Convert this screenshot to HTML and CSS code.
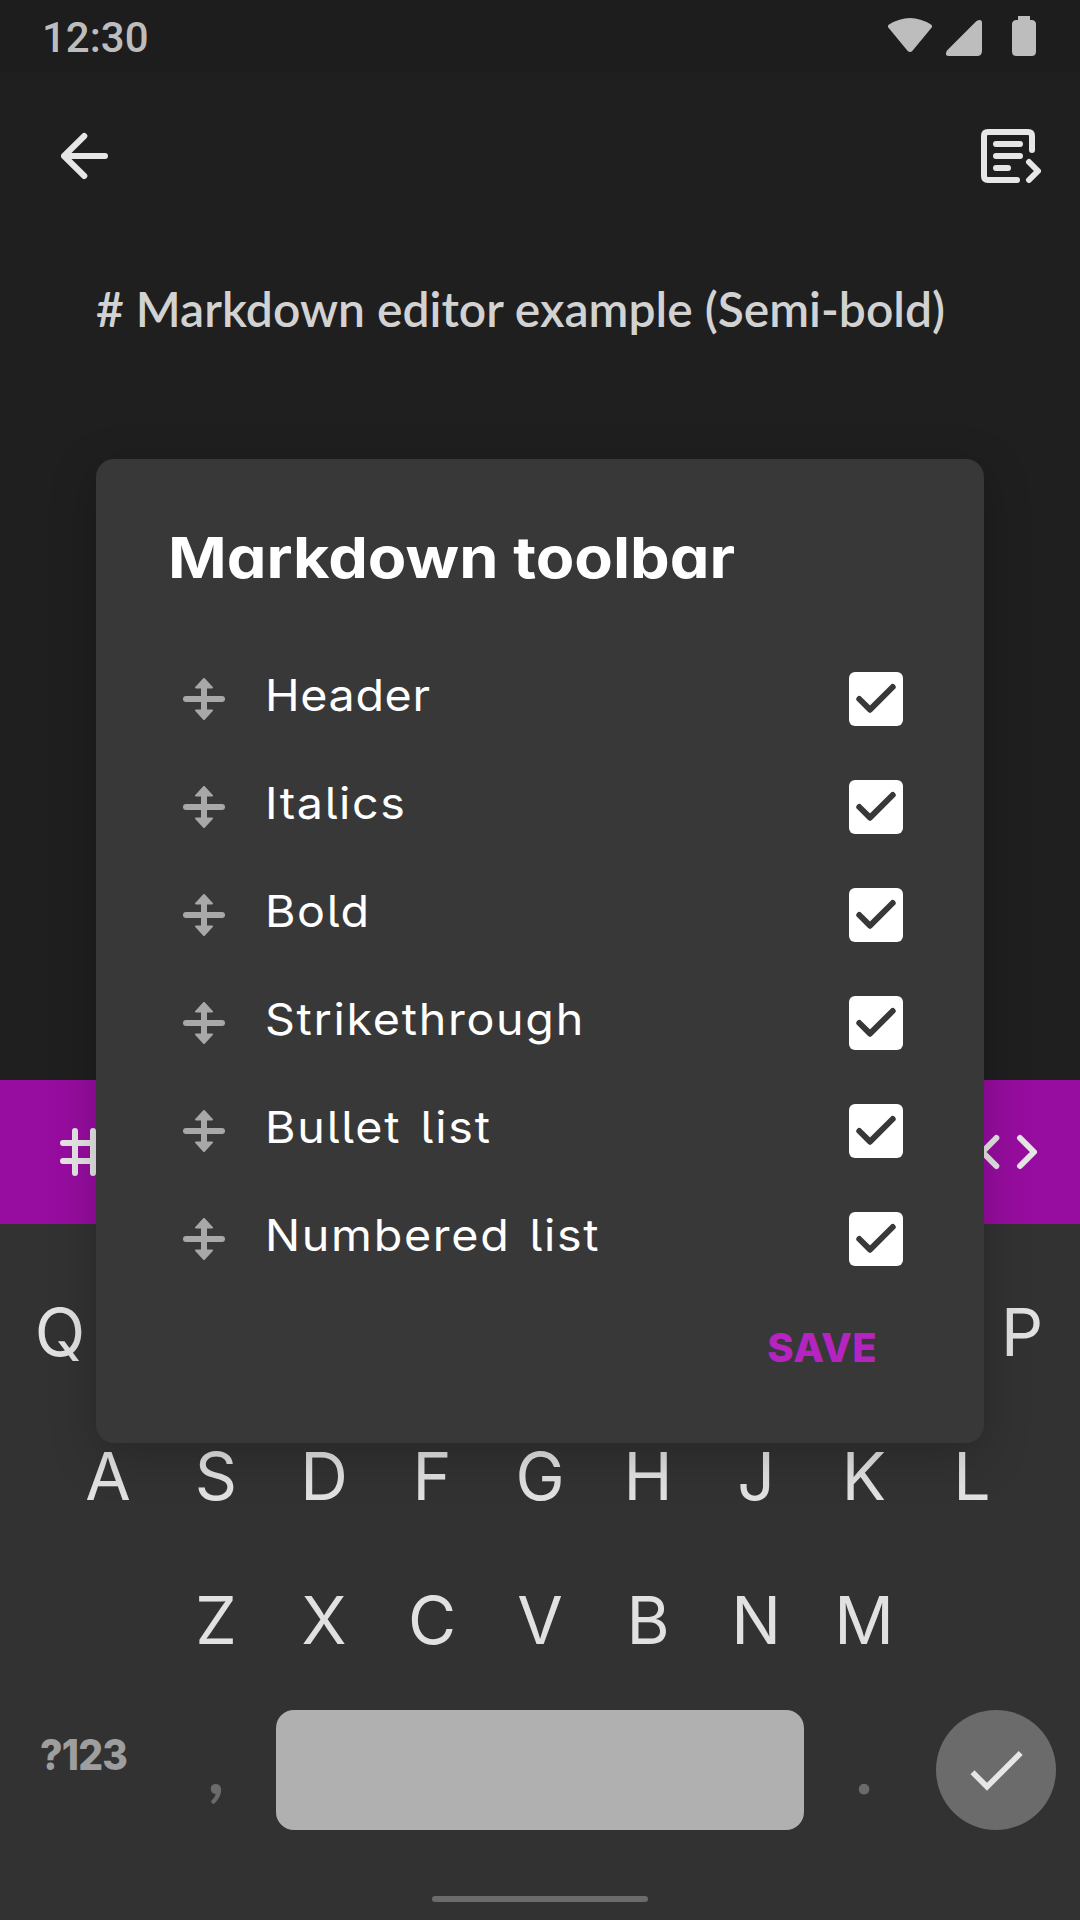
FILE: index.html
```html
<!DOCTYPE html>
<html lang="en">
<head>
<meta charset="utf-8">
<title>Markdown editor</title>
<link rel="stylesheet" href="styles.css">
</head>
<body>
<svg class="defs" width="0" height="0" aria-hidden="true">
  <symbol id="drag" viewBox="0 0 42 42">
    <path d="M3 21H39" fill="none" stroke="currentColor" stroke-width="6" stroke-linecap="round"/>
    <path d="M21 8V34" fill="none" stroke="currentColor" stroke-width="6"/>
    <path d="M21 1L29 9.600H13ZM21 41L29 32.400H13Z" fill="currentColor" stroke="currentColor" stroke-width="2" stroke-linejoin="round"/>
  </symbol>
  <symbol id="check" viewBox="0 0 54 54">
    <path d="M10.300 27L21 37.700L43.700 15" fill="none" stroke="currentColor" stroke-width="6" stroke-linecap="round" stroke-linejoin="round"/>
  </symbol>
</svg>
<div class="screen">
  <header class="status-bar">
    <span class="clock">12:30</span>
    <svg class="status-icons" width="148" height="40" viewBox="888 16 148 40" fill="currentColor">
      <path d="M889 24.500Q910 11.500 931 24.500Q933 26 931.500 27.800L912.500 50.800Q910 53.200 907.500 50.800L888.500 27.800Q887 26 889 24.500Z"/>
      <path d="M976.500 21Q982 18 982 23V51Q982 56 977 56H949Q944 56 947 50.500Z"/>
      <path d="M1018 16H1030V20H1031.500Q1036 20 1036 24.500V51.500Q1036 56 1031.500 56H1016.500Q1012 56 1012 51.500V24.500Q1012 20 1016.500 20H1018Z"/>
    </svg>
  </header>
  <nav class="app-bar">
    <svg width="48" height="48" viewBox="61 132 48 48" class="line-icon"><path d="M84.300 136L64 156L84.300 176M64 156H105"/></svg>
    <svg width="60" height="54" viewBox="981 129 60 54" class="line-icon"><path d="M1032 150V136Q1032 132 1028 132H988Q984 132 984 136V176Q984 180 988 180H1017M996 144H1020M996 156H1020M996 168H1008M1029 162L1038 171L1029 180"/></svg>
  </nav>
  <main class="editor"><p class="source"># Markdown editor example (Semi-bold)</p></main>
  <div class="format-bar">
    <svg width="48" height="48" viewBox="60 1128 48 48" class="line-icon"><path d="M75 1131V1173M93 1131V1173M63 1143H105M63 1161H105"/></svg>
    <svg width="60" height="36" viewBox="978 1134 60 36" class="line-icon"><path d="M996.300 1138L982.500 1152L996.300 1166M1020 1138L1034 1152L1020 1166"/></svg>
  </div>
  <section class="keyboard">
    <div class="keys keys-top"><span>Q</span><span>P</span></div>
    <div class="keys"><span>A</span><span>S</span><span>D</span><span>F</span><span>G</span><span>H</span><span>J</span><span>K</span><span>L</span></div>
    <div class="keys"><span>Z</span><span>X</span><span>C</span><span>V</span><span>B</span><span>N</span><span>M</span></div>
    <div class="bottom-keys">
      <span class="symbols">?123</span>
      <span class="punct">,</span>
      <span class="space"></span>
      <span class="punct">.</span>
      <span class="enter"><svg width="60" height="60" viewBox="966 1740 60 60"><path d="M972.500 1772.200L987 1786.800L1020.700 1753" fill="none" stroke="currentColor" stroke-width="5.600"/></svg></span>
    </div>
    <div class="home-bar"></div>
  </section>

  <section class="dialog">
    <h1 class="dialog-title">Markdown toolbar</h1>
    <ul class="options">
      <li class="option"><svg class="drag"><use href="#drag"/></svg><span class="label header">Header</span><svg class="box"><use href="#check"/></svg></li>
      <li class="option"><svg class="drag"><use href="#drag"/></svg><span class="label italics">Italics</span><svg class="box"><use href="#check"/></svg></li>
      <li class="option"><svg class="drag"><use href="#drag"/></svg><span class="label bold">Bold</span><svg class="box"><use href="#check"/></svg></li>
      <li class="option"><svg class="drag"><use href="#drag"/></svg><span class="label strike">Strikethrough</span><svg class="box"><use href="#check"/></svg></li>
      <li class="option"><svg class="drag"><use href="#drag"/></svg><span class="label bullet">Bullet list</span><svg class="box"><use href="#check"/></svg></li>
      <li class="option"><svg class="drag"><use href="#drag"/></svg><span class="label numbered">Numbered list</span><svg class="box"><use href="#check"/></svg></li>
    </ul>
    <div class="actions"><span class="save">SAVE</span></div>
  </section>
</div>
</body>
</html>
```
FILE: styles.css
```css
* { box-sizing: border-box; margin: 0; padding: 0; }
body { background: #1f1f1f; font-family: "Inter", sans-serif; }
.defs { position: absolute; }
svg { display: block; flex: none; }
.screen { position: relative; width: 1080px; height: 1920px; overflow: hidden; display: flex; flex-direction: column; background: #1f1f1f; }

.status-bar { height: 72px; display: flex; justify-content: space-between; padding: 0 44px 0 42px; background: #1d1d1d; color: #bdbdbd; }
.clock { font: 500 42px/72px "Roboto", sans-serif; padding-top: 2px; }
.status-icons { margin-top: 16px; }

.line-icon { fill: none; stroke: #e6e6e6; stroke-width: 6; stroke-linecap: round; stroke-linejoin: round; }
.app-bar { height: 168px; display: flex; align-items: center; justify-content: space-between; padding: 0 39px 0 61px; }
.editor { height: 840px; padding: 39px 96px 0; }
.source { font: 600 48px/60px "Lato", sans-serif; color: #d2d2d2; white-space: nowrap; }

.format-bar { height: 144px; display: flex; align-items: center; justify-content: space-between; padding: 0 42px 0 60px; background: #970d9f; }

.keyboard { flex: 1; padding-top: 36px; background: #323232; color: #e1e1e1; }
.keys { height: 144px; display: flex; justify-content: center; font-size: 66px; line-height: 144px; }
.keys span { width: 108px; text-align: center; }
.keys-top { justify-content: space-between; padding: 0 4px 0 6px; }
.bottom-keys { height: 120px; margin-top: 18px; padding-right: 24px; display: flex; align-items: center; }
.symbols { width: 122px; margin-left: 40px; padding-bottom: 31px; font-weight: 800; font-size: 42px; letter-spacing: -0.9px; color: #9e9e9e; transform: scaleX(0.93); transform-origin: left; }
.punct { width: 108px; padding-bottom: 5px; text-align: center; font: 700 70px/115px "Lato", sans-serif; color: #6b6b6b; }
.space { width: 528px; height: 120px; border-radius: 18px; background: #b0b0b0; margin-left: 6px; }
.space + .punct { margin: 0 18px 0 6px; }
.enter { width: 120px; height: 120px; border-radius: 50%; background: #6b6b6b; color: #e6e6e6; display: flex; align-items: center; justify-content: center; }
.home-bar { width: 216px; height: 6px; margin: 66px auto 0; border-radius: 3px; background: #6b6b6b; }

.dialog { position: absolute; left: 96px; top: 459px; width: 888px; height: 984px; padding: 63px 81px 0 87px; border-radius: 18px; background: #383838; box-shadow: 0 12px 48px rgba(0, 0, 0, 0.22); }
.dialog-title { margin: 0 0 51px -15px; font-weight: 700; font-size: 57px; line-height: 72px; color: #fff; white-space: nowrap; font-feature-settings: "cv11"; transform: scaleX(1.105); transform-origin: left; }
.options { list-style: none; }
.option { height: 108px; display: flex; align-items: center; }
.drag { width: 42px; height: 42px; color: #a8a8a8; }
.label { margin: 0 auto 8px 40px; font-size: 44px; line-height: 60px; letter-spacing: 1.5px; color: #fff; font-feature-settings: "cv05"; transform: scaleX(1.06); transform-origin: left; }
.header { letter-spacing: 0.6px; }
.strike { letter-spacing: 1.6px; }
.bullet { letter-spacing: 1.7px; word-spacing: 4px; }
.numbered { letter-spacing: 1.6px; word-spacing: 4px; }
.box { width: 54px; height: 54px; border-radius: 6px; background: #fff; color: #383838; }
.actions { height: 108px; display: flex; align-items: center; justify-content: flex-end; padding-right: 26px; }
.save { font-weight: 800; font-size: 40px; letter-spacing: 0.4px; color: #b524c0; }
```
